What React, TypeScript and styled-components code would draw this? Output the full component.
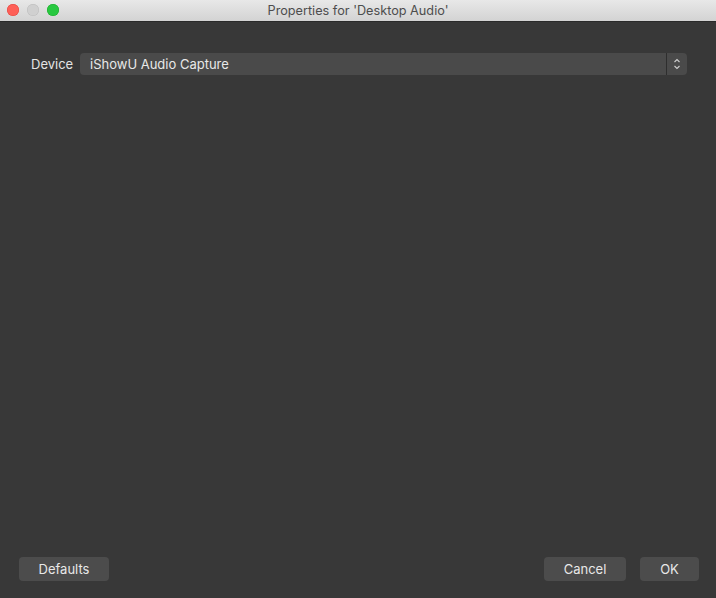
import React from "react";
import styled, { createGlobalStyle } from "styled-components";

const Global = createGlobalStyle`
  html, body { margin: 0; padding: 0; background: #383838; }
  body { font-family: Inter, "Noto Sans", "Liberation Sans", sans-serif; }
  #root { height: 598px; }
`;

const Window = styled.div`
  width: 716px;
  height: 598px;
  display: flex;
  flex-direction: column;
  background: #383838;
  overflow: hidden;
`;

const TitleBar = styled.div`
  position: relative;
  height: 22px;
  flex: none;
  display: flex;
  align-items: center;
  justify-content: center;
  background: linear-gradient(#e8e8e8, #d3d3d3);
  border-bottom: 1px solid #2a2a2a;
  box-sizing: border-box;
`;

const Lights = styled.div`
  position: absolute;
  left: 7px;
  top: 4px;
  display: flex;
  gap: 8px;
`;

const Light = styled.span<{ $c: string; $b: string }>`
  width: 12px;
  height: 12px;
  border-radius: 50%;
  background: ${(p) => p.$c};
  box-shadow: inset 0 0 0 0.5px ${(p) => p.$b};
`;

const Title = styled.div`
  font-size: 12.7px;
  color: #4d4d4d;
`;

const Body = styled.div`
  flex: 1;
  display: flex;
  flex-direction: column;
  padding: 31px 29px 17px 31px;
`;

const Row = styled.div`
  display: flex;
  align-items: center;
  gap: 8px;
`;

const Label = styled.div`
  font-size: 13px;
  color: #e4e4e4;
  width: 41px;
`;

const Select = styled.div`
  flex: 1;
  height: 22px;
  display: flex;
  border-radius: 4px;
  background: #4a4a4a;
  box-sizing: border-box;
  overflow: hidden;
`;

const SelectText = styled.div`
  flex: 1;
  font-size: 13px;
  color: #e8e8e8;
  display: flex;
  align-items: center;
  padding-left: 10px;
`;

const Stepper = styled.div`
  width: 20px;
  border-left: 1px solid #2e2e2e;
  display: flex;
  align-items: center;
  justify-content: center;
`;

const Spacer = styled.div`
  flex: 1;
`;

const Footer = styled.div`
  display: flex;
  align-items: center;
  margin-left: -12px;
  margin-right: -12px;
`;

const Button = styled.button<{ $w: number }>`
  width: ${(p) => p.$w}px;
  height: 24px;
  border: none;
  border-radius: 4px;
  background: #4c4c4c;
  color: #e8e8e8;
  font-family: inherit;
  font-size: 13px;
  padding: 0;
`;

const Gap = styled.div<{ $w: number }>`
  width: ${(p) => p.$w}px;
`;

export default function App() {
  return (
    <>
      <Global />
      <Window>
        <TitleBar>
          <Lights>
            <Light $c="#fe5f57" $b="#e0443e" />
            <Light $c="#d0d0d0" $b="#bcbcbc" />
            <Light $c="#28c840" $b="#1aab29" />
          </Lights>
          <Title>Properties for 'Desktop Audio'</Title>
        </TitleBar>
        <Body>
          <Row>
            <Label>Device</Label>
            <Select>
              <SelectText>iShowU Audio Capture</SelectText>
              <Stepper>
                <svg width="8" height="12" viewBox="0 0 8 12">
                  <path d="M1.5 4 L4 1.5 L6.5 4" fill="none" stroke="#cfcfcf" strokeWidth="1.1" />
                  <path d="M1.5 8 L4 10.5 L6.5 8" fill="none" stroke="#cfcfcf" strokeWidth="1.1" />
                </svg>
              </Stepper>
            </Select>
          </Row>
          <Spacer />
          <Footer>
            <Button $w={90}>Defaults</Button>
            <Spacer />
            <Button $w={82}>Cancel</Button>
            <Gap $w={14} />
            <Button $w={59}>OK</Button>
          </Footer>
        </Body>
      </Window>
    </>
  );
}
